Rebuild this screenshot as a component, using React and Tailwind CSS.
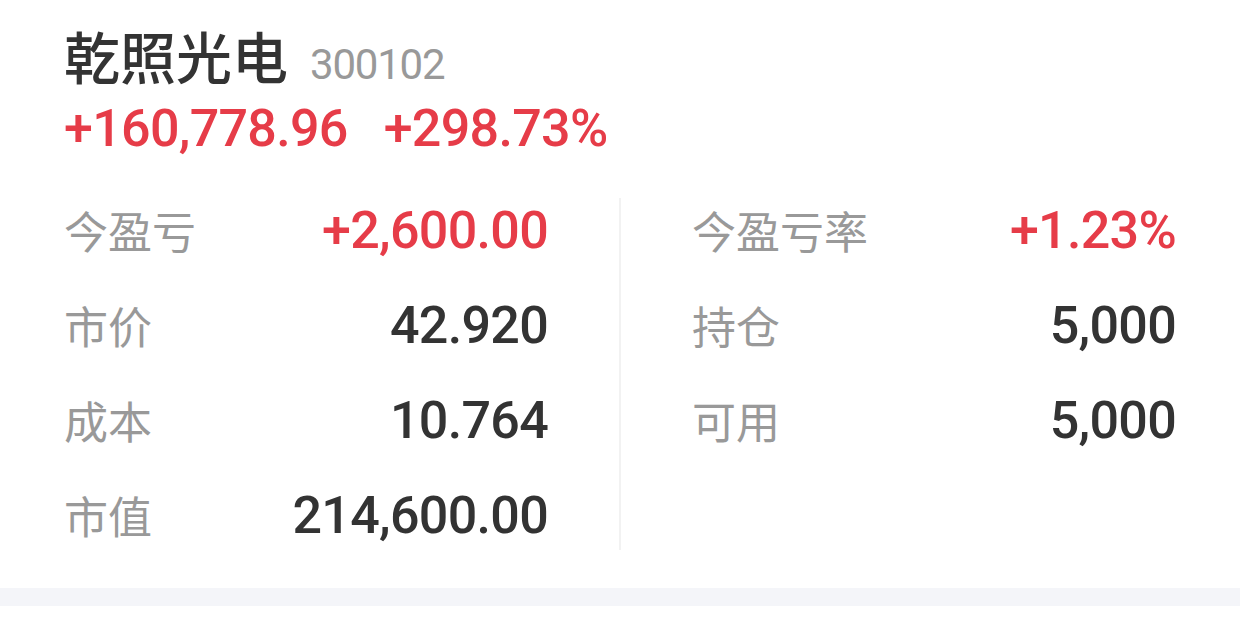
import React from 'react';

const leftRows = [
  { label: '今盈亏', value: '+2,600.00', up: true },
  { label: '市价', value: '42.920' },
  { label: '成本', value: '10.764' },
  { label: '市值', value: '214,600.00' },
];

const rightRows = [
  { label: '今盈亏率', value: '+1.23%', up: true },
  { label: '持仓', value: '5,000' },
  { label: '可用', value: '5,000' },
];

const cjk = "font-['Noto_Sans_CJK_SC',sans-serif]";
const num = "font-['Roboto','Noto_Sans',sans-serif]";

function Row({ label, value, up }) {
  return (
    <div className="h-[95px] flex items-center justify-between">
      <span className={`${cjk} text-[44px] leading-none text-[#999999]`}>{label}</span>
      <span
        className={`${num} font-medium text-[52px] tracking-[-0.7px] leading-none pt-[3px] ${
          up ? 'text-[#e63c48]' : 'text-[#333333]'
        }`}
      >
        {value}
      </span>
    </div>
  );
}

export default function App() {
  return (
    <div className="w-full h-[626px] bg-white flex flex-col overflow-hidden">
      <div className="px-16">
        <div className="mt-[23px] h-[64px] flex items-baseline">
          <span className={`${cjk} font-medium text-[56px] leading-[64px] text-[#333333]`}>乾照光电</span>
          <span className={`${num} text-[42px] tracking-[-1.2px] ml-[22px] text-[#999999]`}>300102</span>
        </div>
        <div
          className={`${num} mt-[13px] h-[58px] leading-[58px] font-medium text-[52px] tracking-[-0.7px] text-[#e63c48] flex gap-[36px]`}
        >
          <span>+160,778.96</span>
          <span>+298.73%</span>
        </div>
        <div className="mt-[24px] h-[380px] flex">
          <div className="flex-1 flex flex-col">
            {leftRows.map((r, i) => (
              <Row key={i} {...r} />
            ))}
          </div>
          <div className="w-[2px] bg-[#f2f2f2] mt-[16px] mb-[12px] mx-[71px]" />
          <div className="flex-1 flex flex-col">
            {rightRows.map((r, i) => (
              <Row key={i} {...r} />
            ))}
          </div>
        </div>
      </div>
      <div className="mt-[26px] h-[18px] bg-[#f4f5f9]" />
    </div>
  );
}
